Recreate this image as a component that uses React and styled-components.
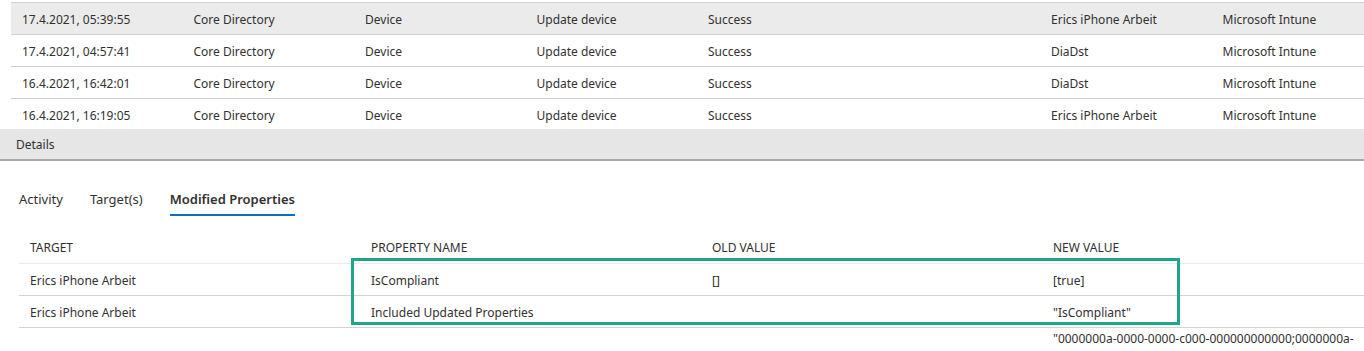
import React from 'react'
import styled, { createGlobalStyle } from 'styled-components'

const GlobalStyle = createGlobalStyle`
  body {
    margin: 0;
    background: #fff;
    font-family: "Noto Sans", "Open Sans", sans-serif;
    color: #323130;
    overflow: hidden;
  }
`

const auditRows = [
  ['17.4.2021, 05:39:55', 'Core Directory', 'Device', 'Update device', 'Success', '', 'Erics iPhone Arbeit', 'Microsoft Intune'],
  ['17.4.2021, 04:57:41', 'Core Directory', 'Device', 'Update device', 'Success', '', 'DiaDst', 'Microsoft Intune'],
  ['16.4.2021, 16:42:01', 'Core Directory', 'Device', 'Update device', 'Success', '', 'DiaDst', 'Microsoft Intune'],
  ['16.4.2021, 16:19:05', 'Core Directory', 'Device', 'Update device', 'Success', '', 'Erics iPhone Arbeit', 'Microsoft Intune'],
]

const propRows = [
  ['Erics iPhone Arbeit', 'IsCompliant', '[]', '[true]'],
  ['Erics iPhone Arbeit', 'Included Updated Properties', '', '"IsCompliant"'],
  ['', '', '', '"0000000a-0000-0000-c000-000000000000;0000000a-'],
]

const App = () => (
  <Page>
    <GlobalStyle />
    <AuditList>
      {auditRows.map((row, i) => (
        <AuditRow key={i} selected={i === 0}>
          {row.map((cell, j) => <AuditCell key={j}>{cell}</AuditCell>)}
        </AuditRow>
      ))}
    </AuditList>

    <DetailsBar>Details</DetailsBar>

    <Tabs>
      <Tab>Activity</Tab>
      <Tab>Target(s)</Tab>
      <Tab active>Modified Properties</Tab>
    </Tabs>

    <PropTable>
      <PropHeader>
        <HeadCell>Target</HeadCell>
        <HeadCell>Property Name</HeadCell>
        <HeadCell>Old Value</HeadCell>
        <HeadCell>New Value</HeadCell>
      </PropHeader>
      {propRows.map((row, i) => (
        <PropRow key={i} last={i === propRows.length - 1}>
          {row.map((cell, j) => <PropCell key={j}>{cell}</PropCell>)}
        </PropRow>
      ))}
      <Highlight />
    </PropTable>
  </Page>
)

const Page = styled.div`
  width: 1364px;
  height: 351px;
  overflow: hidden;
  padding-top: 2px;
  box-sizing: border-box;
`

const AuditList = styled.div`
  height: 126px;
  overflow: hidden;
  margin-left: 11px;
  border-top: 1px solid #cfcfcf;
`

const AuditRow = styled.div`
  display: grid;
  grid-template-columns: repeat(8, 171.5px);
  height: 32px;
  box-sizing: border-box;
  padding-top: 2px;
  align-items: center;
  border-bottom: 1px solid #d2d2d2;
  background: ${p => (p.selected ? '#ebebeb' : '#fff')};
`

const AuditCell = styled.div`
  padding-left: 11px;
  font-size: 12px;
  white-space: nowrap;
`

const DetailsBar = styled.div`
  height: 30px;
  display: flex;
  align-items: center;
  padding-left: 16px;
  background: #e6e6e6;
  border-bottom: 2px solid #a8a8a8;
  font-size: 12px;
`

const Tabs = styled.div`
  display: flex;
  gap: 27px;
  padding: 29px 0 0 19px;
`

const Tab = styled.div`
  font-size: 13px;
  line-height: 18px;
  padding-bottom: 6px;
  font-weight: ${p => (p.active ? 600 : 400)};
  border-bottom: 2px solid ${p => (p.active ? '#0f6cbd' : 'transparent')};
`

const PropTable = styled.div`
  position: relative;
  margin: 15px 0 0 19px;
`

const PropHeader = styled.div`
  display: grid;
  grid-template-columns: repeat(4, 341px);
  height: 32px;
  align-items: center;
  border-bottom: 1px solid #ebebeb;
`

const HeadCell = styled.div`
  padding-left: 11px;
  font-size: 12px;
  text-transform: uppercase;
`

const PropRow = styled.div`
  display: grid;
  grid-template-columns: repeat(4, 341px);
  box-sizing: border-box;
  height: ${p => (p.last ? 'auto' : '32px')};
  padding-top: 2px;
  align-items: ${p => (p.last ? 'start' : 'center')};
  border-bottom: ${p => (p.last ? 'none' : '1px solid #d2d2d2')};
`

const PropCell = styled.div`
  padding-left: 11px;
  font-size: 12px;
  line-height: 18px;
  white-space: nowrap;
`

const Highlight = styled.div`
  position: absolute;
  left: 332px;
  top: 27px;
  width: 829px;
  height: 67px;
  box-sizing: border-box;
  border: 3px solid #1fa58b;
  pointer-events: none;
`

export default App
